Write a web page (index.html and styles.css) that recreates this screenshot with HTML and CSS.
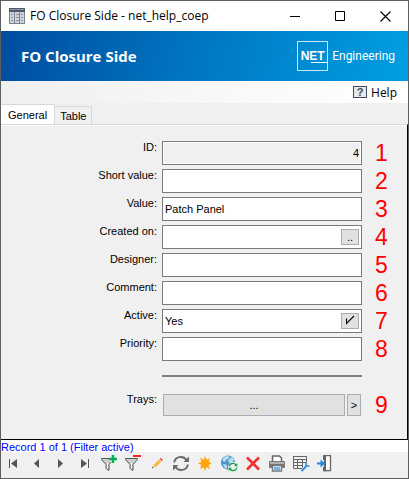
FILE: index.html
```html
<!DOCTYPE html>
<html lang="en">
<head>
    <meta charset="UTF-8">
    <meta name="viewport" content="width=device-width, initial-scale=1.0">
    <title>FO Closure Side - net_help_coep</title>
    <link rel="stylesheet" href="styles.css">
</head>
<body>
    <div class="window">
        <header class="titlebar">
            <svg class="app-icon" width="16" height="16" viewBox="0 0 16 16" shape-rendering="crispEdges">
                <path fill="#4d5868" d="M0 0h16v4H0z"/>
                <path fill="#8b95a3" d="M1 1h14v1H1z"/>
                <path fill="#7b8492" d="M0 4h16v12H0z"/>
                <path fill="#cfd4da" d="M1 4h4v11H1zM6 4h4v11H6zM11 4h4v11h-4z"/>
                <path fill="#8790a0" d="M2 6h2v1H2zM2 9h2v1H2zM2 12h2v1H2zM7 6h3v1H7zM7 9h3v1H7zM7 12h3v1H7zM12 6h2v1h-2zM12 9h2v1h-2zM12 12h2v1h-2z"/>
            </svg>
            <h1 class="titlebar-text">FO Closure Side - net_help_coep</h1>
            <div class="window-buttons">
                <button class="window-btn" aria-label="Minimize">
                    <svg width="11" height="11" viewBox="0 0 11 11"><path d="M0 5.500h10" stroke="#000"/></svg>
                </button>
                <button class="window-btn" aria-label="Maximize">
                    <svg width="11" height="11" viewBox="0 0 11 11"><path d="M.5.500h9v9h-9z" fill="none" stroke="#000"/></svg>
                </button>
                <button class="window-btn" aria-label="Close">
                    <svg width="11" height="11" viewBox="0 0 11 11"><path d="M.5.500l10 10M10.500.500l-10 10" stroke="#000" stroke-width="1.100"/></svg>
                </button>
            </div>
        </header>

        <div class="banner">
            <h2 class="banner-title">FO Closure Side</h2>
            <div class="brand">
                <span class="brand-box">NET</span>
                <span class="brand-name">Engineering</span>
            </div>
        </div>

        <div class="helpbar">
            <button class="help-btn"><span class="help-icon">?</span>Help</button>
        </div>

        <div class="tabs" role="tablist">
            <button class="tab active" role="tab" aria-selected="true">General</button>
            <button class="tab" role="tab" aria-selected="false">Table</button>
        </div>

        <form class="panel">
            <div class="row">
                <label for="id">ID:</label>
                <div class="field readonly"><input id="id" type="text" value="4" readonly></div>
                <span class="mark">1</span>
            </div>
            <div class="row">
                <label for="short">Short value:</label>
                <div class="field"><input id="short" type="text"></div>
                <span class="mark">2</span>
            </div>
            <div class="row">
                <label for="value">Value:</label>
                <div class="field"><input id="value" type="text" value="Patch Panel"></div>
                <span class="mark">3</span>
            </div>
            <div class="row">
                <label for="created">Created on:</label>
                <div class="field">
                    <input id="created" type="text">
                    <button class="field-btn" type="button" aria-label="Pick date">..</button>
                </div>
                <span class="mark">4</span>
            </div>
            <div class="row">
                <label for="designer">Designer:</label>
                <div class="field"><input id="designer" type="text"></div>
                <span class="mark">5</span>
            </div>
            <div class="row">
                <label for="comment">Comment:</label>
                <div class="field"><input id="comment" type="text"></div>
                <span class="mark">6</span>
            </div>
            <div class="row">
                <label for="active">Active:</label>
                <div class="field">
                    <input id="active" type="text" value="Yes">
                    <button class="field-btn" type="button" aria-label="Toggle active">
                        <svg width="10" height="10" viewBox="0 0 10 10"><path d="M1.500 3.500v5L9 1" fill="none" stroke="#000" stroke-width="1.100"/></svg>
                    </button>
                </div>
                <span class="mark">7</span>
            </div>
            <div class="row">
                <label for="priority">Priority:</label>
                <div class="field"><input id="priority" type="text"></div>
                <span class="mark">8</span>
            </div>
            <div class="row divider"><hr></div>
            <div class="row">
                <label for="trays">Trays:</label>
                <div class="trays">
                    <button id="trays" class="push wide" type="button">...</button>
                    <button class="push" type="button" aria-label="Open trays">&gt;</button>
                </div>
                <span class="mark">9</span>
            </div>
        </form>

        <div class="status">Record 1 of 1 (Filter active)</div>

        <div class="toolbar" role="toolbar">
            <button class="tool" aria-label="First">
                <svg viewBox="0 0 18 18"><path fill="#555" d="M5 5h1v9H5zM13 5v9L7 9.500z"/></svg>
            </button>
            <button class="tool" aria-label="Previous">
                <svg viewBox="0 0 18 18"><path fill="#555" d="M11 5v9L6 9.500z"/></svg>
            </button>
            <button class="tool" aria-label="Next">
                <svg viewBox="0 0 18 18"><path fill="#555" d="M6 5v9l5-4.500z"/></svg>
            </button>
            <button class="tool" aria-label="Last">
                <svg viewBox="0 0 18 18"><path fill="#555" d="M5 5v9l6-4.500zM12 5h1v9h-1z"/></svg>
            </button>
            <button class="tool" aria-label="Set filter">
                <svg viewBox="0 0 18 18">
                    <path fill="#ccc" stroke="#555" d="M1.500 4.500h12v1l-4.500 5v6l-3-2v-4l-4.500-5z"/>
                    <path fill="#fff" d="M7 9h1v6H7z"/>
                    <path fill="none" stroke="#f0f0f0" stroke-width="4" d="M13 1v8M9 5h8"/>
                    <path fill="none" stroke="#00ad50" stroke-width="2.500" d="M13 1v8M9 5h8"/>
                </svg>
            </button>
            <button class="tool" aria-label="Remove filter">
                <svg viewBox="0 0 18 18">
                    <path fill="#ccc" stroke="#555" d="M1.500 4.500h12v1l-4.500 5v6l-3-2v-4l-4.500-5z"/>
                    <path fill="#fff" d="M7 9h1v6H7z"/>
                    <path fill="#f0f0f0" d="M8 0h10v4H8z"/>
                    <path fill="#f22" d="M9 1h8v2H9z"/>
                </svg>
            </button>
            <button class="tool" aria-label="Edit">
                <svg viewBox="0 0 18 18">
                    <path fill="#f6b93c" d="M5.500 11l5.500-5.500 2.200 2.200-5.500 5.500z"/>
                    <path fill="#ef5350" d="M11.500 5l1.300-1.200 2.200 2.200-1.300 1.200z"/>
                    <path fill="#e8c9a0" d="M5.500 11l2.200 2.200L4 14.500z"/>
                    <path fill="#444" d="M4.500 12.800l1 1L3.800 14.500z"/>
                </svg>
            </button>
            <button class="tool" aria-label="Refresh">
                <svg viewBox="0 0 18 18">
                    <path fill="none" stroke="#6a6a6a" stroke-width="2" d="M2.200 8.500C3 2 11.500 1.500 14.500 6M15.800 10.500C15 17 6.500 17.500 3.500 13"/>
                    <path fill="#6a6a6a" d="M17 2.500V8h-5.500zM1 16.500V11h5.500z"/>
                </svg>
            </button>
            <button class="tool" aria-label="New">
                <svg viewBox="0 0 18 18"><path fill="#ffa50a" d="M9 2l1.600 3.800L14 4l-1.500 3.800L16 9.500l-3.500 1.400L14 15l-3.600-1.800L9 17l-1.400-3.800L4 15l1.500-4.100L2 9.500l3.500-1.700L4 4l3.600 1.800z"/></svg>
            </button>
            <button class="tool" aria-label="Update from web">
                <svg viewBox="0 0 18 18">
                    <circle cx="8" cy="8.500" r="7" fill="#4a94cb"/>
                    <path fill="#b9dcf0" d="M2.500 5L6 2l4 .5L8 5 6 6 5 8 3 7.500zM9 5l3-2 2 2-1 3-3 1-2-1.500zM3 10l3 .5 1.500 2L6 15l-2-2z"/>
                    <circle cx="13" cy="13" r="5" fill="#f0f0f0"/>
                    <path fill="none" stroke="#14a44d" stroke-width="1.300" d="M9.200 12.500c.5-3.500 5-4 6.800-1.500M16.800 13.500c-.5 3.500-5 4-6.800 1.500"/>
                    <path fill="#14a44d" d="M17.300 9v3.300H14zM8.700 17v-3.300H12z"/>
                </svg>
            </button>
            <button class="tool" aria-label="Delete">
                <svg viewBox="0 0 18 18"><path fill="none" stroke="#f52f2f" stroke-width="2.600" d="M3 3.500L15 15.500M15 3.500L3 15.500"/></svg>
            </button>
            <button class="tool" aria-label="Print">
                <svg viewBox="0 0 18 18">
                    <path fill="#fff" stroke="#666" stroke-width="1.500" d="M4.500 7V2h7L13.500 4v3"/>
                    <rect x="1" y="7" width="16" height="7" rx="1" fill="#777"/>
                    <path fill="#f0f0f0" d="M2 8.500h14v1H2z"/>
                    <path fill="#fff" stroke="#777" stroke-width="1.500" d="M4.500 11.500h9V17h-9z"/>
                    <path fill="#6fb5ea" d="M6 13h6v3H6z"/>
                </svg>
            </button>
            <button class="tool" aria-label="Table settings">
                <svg viewBox="0 0 18 18">
                    <path fill="none" stroke="#666" d="M14.500 8V2.500h-13v12H10M1.500 5.500h13M1.500 8.500h13M1.500 11.500H11M5.500 5.500v9M10.500 5.500v8"/>
                    <path fill="#666" d="M1 2h14v1H1z"/>
                    <path fill="none" stroke="#2b8fe5" stroke-width="1.900" d="M9.500 17l5-5"/>
                    <path fill="none" stroke="#2b8fe5" stroke-width="1.600" d="M14 8.500v3.500h3.500"/>
                </svg>
            </button>
            <button class="tool" aria-label="Exit">
                <svg viewBox="0 0 18 18">
                    <path fill="#fff" stroke="#666" stroke-width="1.300" d="M8.500 1.700h6v15h-6z"/>
                    <path fill="#666" d="M7 1h3v5H7zM7 13h3v4.300H7z"/>
                    <path fill="#666" d="M8 6h2v7H8z"/>
                    <path fill="#1e88e5" d="M1 8.500h3.500v-3L9 9.500l-4.500 4v-3H1z"/>
                </svg>
            </button>
        </div>
    </div>
</body>
</html>
```
FILE: styles.css
```css
:root {
    --face: #f0f0f0;
    --border: #7a7a7a;
    --button: #e1e1e1;
    --button-border: #adadad;
    --ui: "Open Sans", "Noto Sans", sans-serif;
    --form: "Liberation Sans", Arial, sans-serif;
}

* {
    margin: 0;
    padding: 0;
    box-sizing: border-box;
}

body {
    font-family: var(--form);
    font-size: 11px;
    color: #000;
}

button,
input {
    font: inherit;
    color: inherit;
    border: none;
    background: none;
}

.window {
    display: flex;
    flex-direction: column;
    min-height: 100vh;
    border: 1px solid #5f5f5f;
    background: var(--face);
}

/* title bar */
.titlebar {
    display: flex;
    align-items: center;
    height: 30px;
    padding-left: 8px;
    background: #fff;
}

.titlebar-text {
    flex: 1;
    margin-left: 5px;
    font-family: var(--ui);
    font-size: 12px;
    font-weight: 400;
    line-height: 16px;
    white-space: nowrap;
}

.window-buttons {
    display: flex;
}

.window-btn {
    display: flex;
    align-items: center;
    justify-content: center;
    width: 45px;
    height: 30px;
}

/* banner */
.banner {
    display: flex;
    align-items: center;
    justify-content: space-between;
    height: 50px;
    padding: 0 13px 0 20px;
    background: linear-gradient(105deg, #004c9f, #0078c3 50%, #009fe3);
    color: #fff;
}

.banner-title {
    font-family: var(--ui);
    font-size: 15px;
    font-weight: 700;
}

.brand {
    display: flex;
    align-items: center;
    gap: 4px;
}

.brand-box {
    width: 31px;
    height: 30px;
    border: 1px solid #cfe8f8;
    font-size: 12px;
    font-weight: 700;
    line-height: 28px;
    text-align: center;
    background: linear-gradient(#fff, #fff) right 20px / 16px 1px no-repeat;
}

.brand-name {
    font-family: Roboto, sans-serif;
    font-size: 12px;
}

/* help */
.helpbar {
    display: flex;
    justify-content: flex-end;
    height: 22px;
    padding-right: 11px;
    background: linear-gradient(90deg, #f0f0f0, #fff);
}

.help-btn {
    display: flex;
    align-items: center;
    gap: 4px;
    font-family: var(--ui);
    font-size: 12px;
}

.help-icon {
    width: 14px;
    height: 12px;
    border: 1px solid #444b57;
    background: #e4e7ec;
    color: #444b57;
    font-family: var(--form);
    font-size: 11px;
    font-weight: 700;
    line-height: 10px;
    text-align: center;
}

/* tabs */
.tabs {
    display: flex;
    align-items: flex-end;
    height: 21px;
}

.tab {
    height: 18px;
    padding: 0 5px;
    border: 1px solid #d9d9d9;
    border-bottom: none;
    border-left: none;
}

.tab.active {
    height: 20px;
    padding: 0 7px;
    background: #fff;
}

/* form */
.panel {
    flex: 1;
    display: flex;
    flex-direction: column;
    gap: 6px;
    padding: 16px 0 20px;
    border-top: 1px solid #d9d9d9;
    border-right: 1px solid #000;
    border-bottom: 1px solid #000;
    box-shadow: inset 0 1px #fff;
}

.row {
    display: grid;
    grid-template-columns: 156fr 200fr 40fr;
    column-gap: 5px;
    height: 22px;
}

.row label {
    line-height: 12px;
    text-align: right;
}

.field {
    display: flex;
    align-items: center;
    border: 1px solid var(--border);
    padding: 0 2px;
    background: #fff;
}

.field input {
    flex: 1;
    min-width: 0;
    height: 18px;
    outline: none;
}

.field.readonly {
    background: var(--face);
    box-shadow: inset 0 0 0 1px #fff;
}

.readonly input {
    text-align: right;
}

.field-btn {
    width: 18px;
    height: 16px;
    border: 1px solid var(--button-border);
    background: var(--button);
    line-height: 12px;
}

.mark {
    padding-left: 8px;
    color: #f00;
    font-size: 23px;
    line-height: 24px;
}

.divider {
    align-items: center;
}

.divider hr {
    grid-column: 2;
    border: none;
    height: 2px;
    background: #808080;
}

.trays {
    display: flex;
    gap: 2px;
    padding: 1px;
}

.push {
    width: 14px;
    border: 1px solid var(--button-border);
    background: var(--button);
}

.push.wide {
    flex: 1;
}

/* status and toolbar */
.status {
    height: 12px;
    background: #fff;
    color: #00f;
    line-height: 14px;
}

.toolbar {
    display: flex;
    height: 26px;
}

.tool {
    display: flex;
    justify-content: center;
    width: 24px;
    padding-top: 2px;
}

.tool svg {
    width: 18px;
    height: 18px;
}
```
